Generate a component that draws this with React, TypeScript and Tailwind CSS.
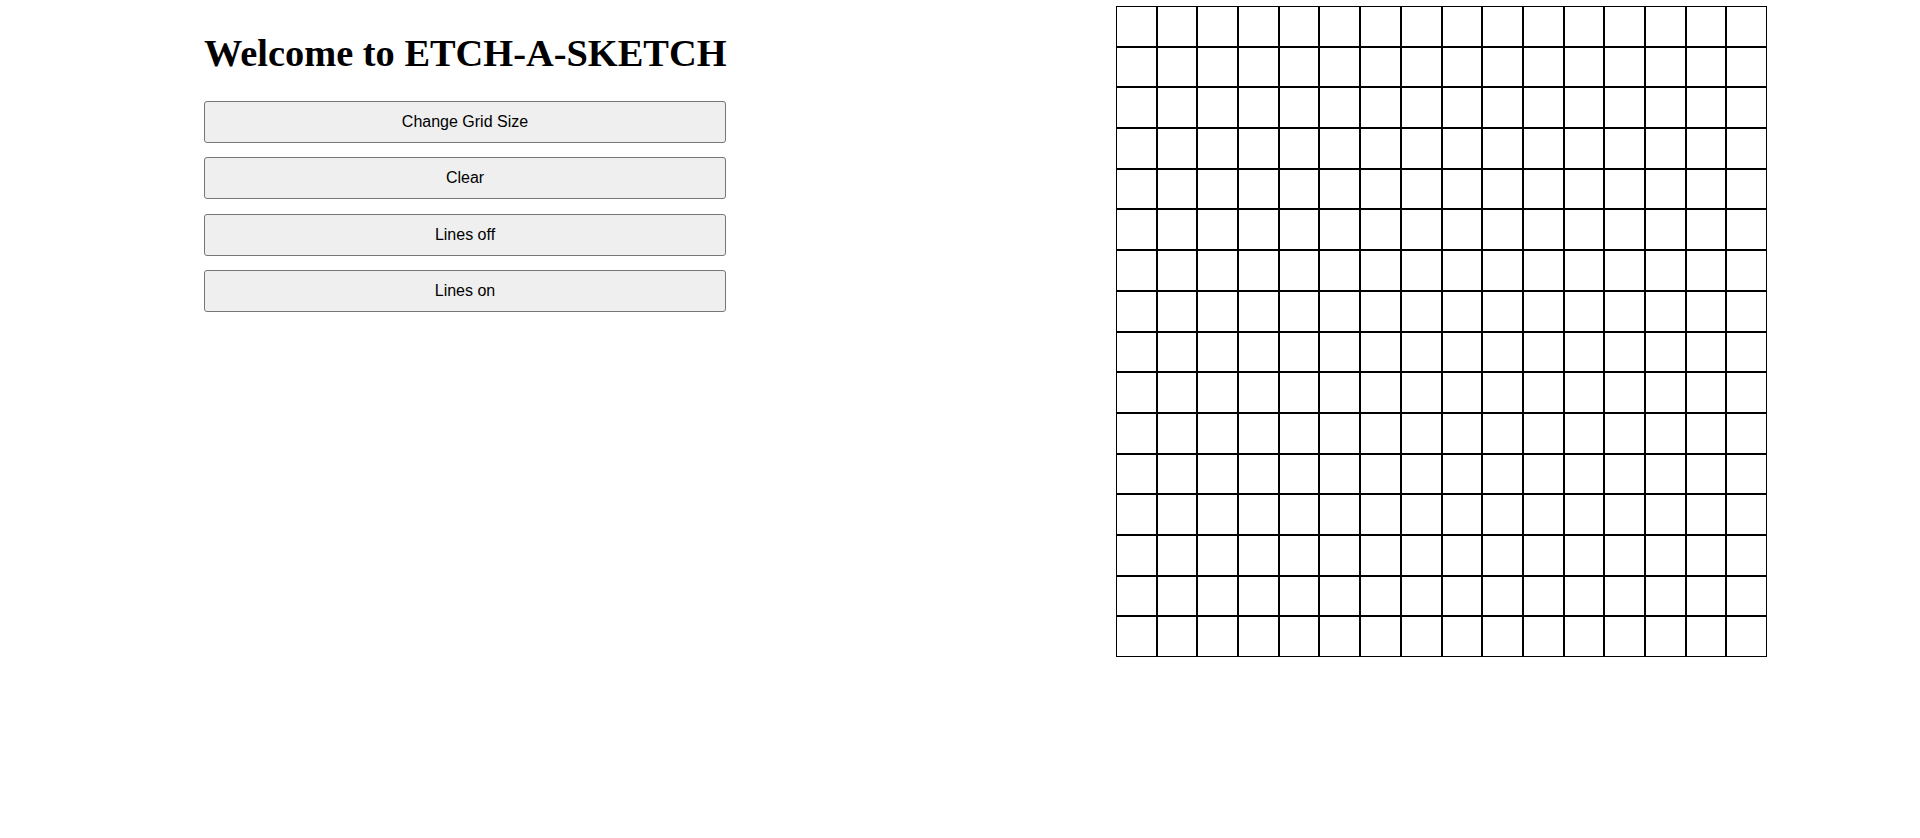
const buttons = ["Change Grid Size", "Clear", "Lines off", "Lines on"];

const cells = Array.from({ length: 16 * 16 }, (_, i) => i);

export default function App() {
  return (
    <main className="min-h-screen bg-white flex items-start">
      <div className="ml-[204px] w-[522px] flex flex-col">
        <h1 className="mt-[25px] text-[38.4px] font-bold text-black whitespace-nowrap font-['Liberation_Serif','Times_New_Roman',serif]">
          Welcome to ETCH-A-SKETCH
        </h1>
        <div className="mt-[18px] flex flex-col gap-[14.5px]">
          {buttons.map((label) => (
            <button
              key={label}
              className="h-[42px] w-full bg-[#efefef] border border-[#767676] rounded-[3px] text-[16px] text-black font-['Liberation_Sans',Arial,sans-serif]"
            >
              {label}
            </button>
          ))}
        </div>
      </div>

      <div className="ml-[390px] mt-[6px] w-[651px] h-[651px] grid grid-cols-[repeat(16,1fr)] grid-rows-[repeat(16,1fr)]">
        {cells.map((i) => (
          <div key={i} className="border border-black bg-white" />
        ))}
      </div>
    </main>
  );
}
